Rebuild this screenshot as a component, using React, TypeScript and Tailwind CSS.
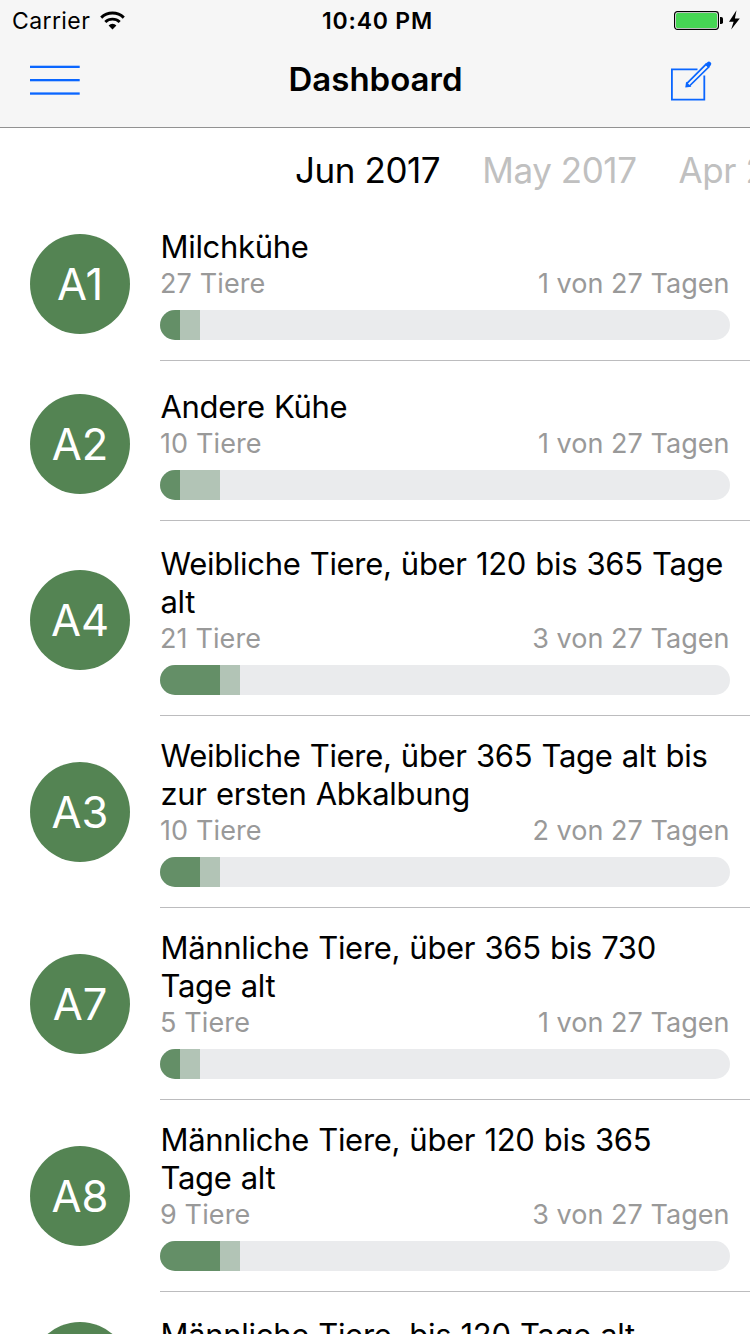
type Entry = {
  code: string;
  lines: string[];
  animals: string;
  days: string;
  done: number;
  next: number;
  space: string;
  badge: string;
};

const entries: Entry[] = [
  { code: "A1", lines: ["Milchkühe"], animals: "27 Tiere", days: "1 von 27 Tagen", done: 20, next: 20, space: "pt-[27px]", badge: "pt-1.5" },
  { code: "A2", lines: ["Andere Kühe"], animals: "10 Tiere", days: "1 von 27 Tagen", done: 20, next: 40, space: "pt-[27px]", badge: "pt-1.5" },
  { code: "A4", lines: ["Weibliche Tiere, über 120 bis 365 Tage", "alt"], animals: "21 Tiere", days: "3 von 27 Tagen", done: 60, next: 20, space: "pt-6", badge: "pt-[25px]" },
  { code: "A3", lines: ["Weibliche Tiere, über 365 Tage alt bis", "zur ersten Abkalbung"], animals: "10 Tiere", days: "2 von 27 Tagen", done: 40, next: 20, space: "pt-[21px]", badge: "pt-[25px]" },
  { code: "A7", lines: ["Männliche Tiere, über 365 bis 730", "Tage alt"], animals: "5 Tiere", days: "1 von 27 Tagen", done: 20, next: 20, space: "pt-[21px]", badge: "pt-[25px]" },
  { code: "A8", lines: ["Männliche Tiere, über 120 bis 365", "Tage alt"], animals: "9 Tiere", days: "3 von 27 Tagen", done: 60, next: 20, space: "pt-[21px]", badge: "pt-[25px]" },
  { code: "A9", lines: ["Männliche Tiere, bis 120 Tage alt"], animals: "4 Tiere", days: "1 von 27 Tagen", done: 20, next: 20, space: "pt-6", badge: "pt-1.5" },
];

function Menu() {
  return (
    <svg width="50" height="30" viewBox="0 0 50 30" fill="#0a66ff">
      <rect y="0.7" width="49.7" height="2.3" />
      <rect y="14" width="49.7" height="2.3" />
      <rect y="27.4" width="49.7" height="2.3" />
    </svg>
  );
}

function Wifi() {
  return (
    <svg width="26" height="20" viewBox="0 0 26 20" className="ml-[10px]" fill="none" stroke="#000">
      <path d="M1.2 6.6a16.3 16.3 0 0 1 22.6 0" strokeWidth="2.9" />
      <path d="M5.3 11a10.4 10.4 0 0 1 14.4 0" strokeWidth="2.9" />
      <path d="M8.6 14.4a5.6 5.6 0 0 1 7.8 0L12.5 18.5z" fill="#000" stroke="none" />
    </svg>
  );
}

function Battery() {
  return (
    <svg width="68" height="22" viewBox="0 0 68 22">
      <rect x="0.6" y="1.6" width="43.8" height="17.8" rx="2.8" fill="#fff" stroke="#000" strokeWidth="1.2" />
      <rect x="2" y="3" width="41" height="15" rx="1.5" fill="#46d654" />
      <path d="M46 7h1.2a1.8 1.8 0 0 1 1.8 1.8v3.4a1.8 1.8 0 0 1-1.8 1.8H46z" fill="#000" />
      <path d="M62.5 0.3L55 11.7h4.6L57.2 19.4L65.8 8.4h-4.9z" fill="#000" />
    </svg>
  );
}

function Compose() {
  return (
    <svg width="44" height="42" viewBox="0 0 44 42" fill="none" stroke="#0a66ff">
      <path d="M27.5 9.3H1.9v30.3h32.4V15.5" strokeWidth="1.8" />
      <path d="M17.2 23.1L36 4.3l2.7 2.7L19.9 25.5l-3.1.5z" strokeWidth="1.7" />
      <path d="M36.2 4.2l1.6-1.4a1.5 1.5 0 0 1 2.3 2.2l-1.5 1.8z" fill="#0a66ff" strokeWidth="1.4" />
      <path d="M16.5 23l-.5 3.7 4-.5z" fill="#0a66ff" strokeWidth="1.2" />
    </svg>
  );
}

function Row({ entry }: { entry: Entry }) {
  return (
    <div className={`flex shrink-0 pl-[30px] ${entry.space}`}>
      <div className={`mr-[30px] shrink-0 ${entry.badge}`}>
        <div className="flex size-[100px] items-center justify-center rounded-full bg-[#548453] pt-0.5 text-[43.5px] text-white">
          {entry.code}
        </div>
      </div>
      <div className="min-w-0 grow border-b border-[#bcbcbe] pb-5">
        <div className="pr-5">
          {entry.lines.map((line) => (
            <div key={line} className="pl-[0.5px] text-[31px] leading-[38px] tracking-[-0.3px] whitespace-nowrap text-black [word-spacing:0.8px]">
              {line}
            </div>
          ))}
          <div className="mb-[9px] flex justify-between pr-[0.5px] text-[27px] leading-[35px] text-[#999999]">
            <span className="tracking-[0.12px]">{entry.animals}</span>
            <span className="tracking-[0.03px]">{entry.days}</span>
          </div>
          <div className="flex h-[30px] overflow-hidden rounded-full bg-[#eaebed]">
            <div className="bg-[#648f67]" style={{ width: entry.done }} />
            <div className="bg-[#b2c4b6]" style={{ width: entry.next }} />
          </div>
        </div>
      </div>
    </div>
  );
}

export default function App() {
  return (
    <div className="flex h-[1334px] w-[750px] flex-col overflow-hidden bg-white font-['Inter',sans-serif]">
      <header className="h-32 shrink-0 border-b border-[#929292] bg-[#f6f6f6]">
        <div className="grid h-[42px] grid-cols-3 items-center text-[23px] text-black">
          <div className="flex items-center pl-3">
            <span className="tracking-[0.4px]">Carrier</span>
            <Wifi />
          </div>
          <div className="pl-[5px] text-center font-semibold tracking-[0.8px]">10:40 PM</div>
          <div className="flex justify-end pr-2">
            <Battery />
          </div>
        </div>
        <div className="grid h-[76px] grid-cols-3 items-center">
          <div className="pl-[30px]">
            <Menu />
          </div>
          <h1 className="pl-px text-center text-[33px] font-semibold text-black">Dashboard</h1>
          <div className="flex justify-end pt-0.5 pr-9">
            <Compose />
          </div>
        </div>
      </header>
      <nav className="flex h-[73px] shrink-0 gap-[42px] overflow-hidden pt-5 pl-[295px] text-[35px] leading-[44px] tracking-[-0.43px] whitespace-nowrap text-[#c0c0c0]">
        <span className="text-black">Jun 2017</span>
        <span>May 2017</span>
        <span>Apr 2017</span>
      </nav>
      <main className="flex flex-col">
        {entries.map((entry) => (
          <Row key={entry.code} entry={entry} />
        ))}
      </main>
    </div>
  );
}
